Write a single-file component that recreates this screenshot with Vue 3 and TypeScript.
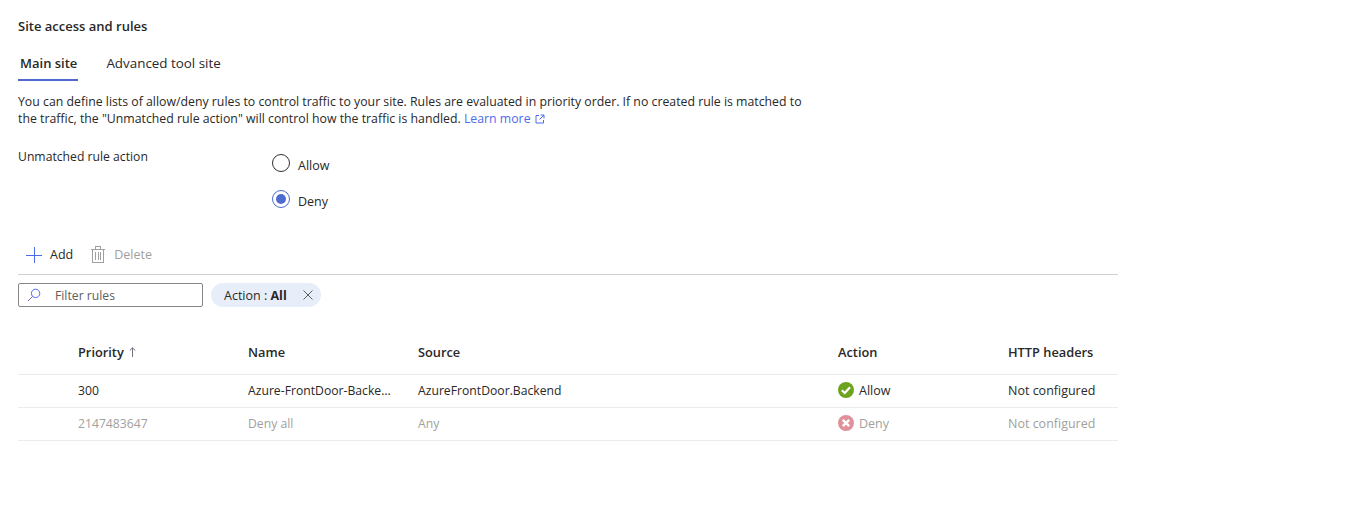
<template>
  <div class="page">
    <h2 class="title">Site access and rules</h2>

    <div class="tabs">
      <div
        v-for="tab in tabs"
        :key="tab"
        class="tab"
        :class="{ active: tab === activeTab }"
      >
        {{ tab }}
      </div>
    </div>

    <p class="intro">
      You can define lists of allow/deny rules to control traffic to your site. Rules are evaluated in priority order. If no created rule is matched to
      the traffic, the "Unmatched rule action" will control how the traffic is handled.
      <a class="link">Learn more</a>
      <svg class="ext" width="10" height="10" viewBox="0 0 10 10" fill="none" stroke="#4f6bed" stroke-width="1">
        <path d="M4 1.5H1V9h7.5V6" />
        <path d="M5.5 1H9v3.5M9 1 4.5 5.5" />
      </svg>
    </p>

    <div class="field">
      <div class="field-label">Unmatched rule action</div>
      <div class="radios">
        <div v-for="opt in options" :key="opt" class="radio-row">
          <span class="radio" :class="{ checked: opt === selected }"></span>
          <span class="radio-text">{{ opt }}</span>
        </div>
      </div>
    </div>

    <div class="toolbar">
      <div class="tool">
        <svg width="16" height="16" viewBox="0 0 16 16" stroke="#4f6bed" stroke-width="1" fill="none" shape-rendering="crispEdges">
          <path d="M8 0v16M0 8h16" />
        </svg>
        <span>Add</span>
      </div>
      <div class="tool disabled">
        <svg width="14" height="17" viewBox="0 0 14 17" stroke="#a19f9d" stroke-width="1" fill="none" shape-rendering="crispEdges">
          <path d="M0 3.5h14M4.5 3V.5h5V3M1.5 3.5v13h11v-13M4.5 6v8M7 6v8M9.5 6v8" />
        </svg>
        <span>Delete</span>
      </div>
    </div>

    <div class="filters">
      <div class="search">
        <svg width="14" height="14" viewBox="0 0 14 14" fill="none" stroke-width="1">
          <circle cx="8.6" cy="5.4" r="4.2" stroke="#4f6bed" />
          <path d="M5.6 8.4 1 13" stroke="#8a5fc7" />
        </svg>
        <span>Filter rules</span>
      </div>
      <div class="chip">
        <span>Action : <b>All</b></span>
        <svg width="10" height="10" viewBox="0 0 10 10" stroke="#605e5c" stroke-width="1" fill="none">
          <path d="M.5.5l9 9M9.5.5l-9 9" />
        </svg>
      </div>
    </div>

    <div class="table">
      <div class="row head">
        <div class="cell sortable">
          Priority
          <svg width="7" height="10" viewBox="0 0 7 10" fill="none" stroke="#7a6f80" stroke-width="1">
            <path d="M3.5 10V.8M.8 3.4 3.5.8l2.7 2.6" />
          </svg>
        </div>
        <div class="cell">Name</div>
        <div class="cell">Source</div>
        <div class="cell">Action</div>
        <div class="cell">HTTP headers</div>
      </div>
      <div
        v-for="rule in rules"
        :key="rule.priority"
        class="row"
        :class="{ muted: rule.action === 'Deny' }"
      >
        <div class="cell narrow">{{ rule.priority }}</div>
        <div class="cell narrow clip">{{ rule.name }}</div>
        <div class="cell narrow">{{ rule.source }}</div>
        <div class="cell action">
          <svg v-if="rule.action === 'Allow'" width="16" height="16" viewBox="0 0 16 16">
            <circle cx="8" cy="8" r="8" fill="#6ea31f" />
            <path d="M3.8 8.2 6.8 11l5.2-5.8" fill="none" stroke="#fff" stroke-width="2.2" />
          </svg>
          <svg v-else width="16" height="16" viewBox="0 0 16 16">
            <circle cx="8" cy="8" r="8" fill="#e0929a" />
            <path d="M4.8 4.8l6.4 6.4M11.2 4.8l-6.4 6.4" fill="none" stroke="#fff" stroke-width="2.4" />
          </svg>
          <span>{{ rule.action }}</span>
        </div>
        <div class="cell">{{ rule.headers }}</div>
      </div>
    </div>
  </div>
</template>

<script setup lang="ts">
interface Rule {
  priority: string
  name: string
  source: string
  action: 'Allow' | 'Deny'
  headers: string
}

const tabs = ['Main site', 'Advanced tool site']
const activeTab = 'Main site'
const options = ['Allow', 'Deny']
const selected = 'Deny'

const rules: Rule[] = [
  {
    priority: '300',
    name: 'Azure-FrontDoor-Backend-Access',
    source: 'AzureFrontDoor.Backend',
    action: 'Allow',
    headers: 'Not configured'
  },
  {
    priority: '2147483647',
    name: 'Deny all',
    source: 'Any',
    action: 'Deny',
    headers: 'Not configured'
  }
]
</script>

<style>
html,
body {
  margin: 0;
  background: #fff;
}
</style>

<style scoped>
.page {
  width: 1118px;
  height: 526px;
  box-sizing: border-box;
  padding: 18px 0 0 18px;
  font-family: "Open Sans", "Noto Sans", sans-serif;
  font-size: 12.5px;
  color: #292827;
}

.title {
  margin: 0;
  font-size: 13px;
  line-height: 17px;
  font-weight: 600;
}

.tabs {
  display: flex;
  gap: 26px;
  margin-top: 17px;
}

.tab {
  height: 29px;
  line-height: 23px;
  padding: 0 2px;
  font-size: 13.4px;
}

.tab.active {
  font-size: 13px;
  font-weight: 600;
  border-bottom: 2px solid #4f6bcf;
  height: 27px;
  padding-right: 1px;
}

.intro {
  width: 790px;
  margin: 12px 0 0;
  line-height: 17px;
  font-size: 12.3px;
}

.link {
  color: #4f6bed;
}

.ext {
  margin-left: 4px;
  vertical-align: -1px;
}

.field {
  display: flex;
  margin-top: 21px;
}

.field-label {
  width: 254px;
  line-height: 17px;
  font-size: 12.2px;
}

.radios {
  display: flex;
  flex-direction: column;
  gap: 18px;
  margin-top: 6px;
}

.radio-row {
  display: flex;
  align-items: center;
  gap: 8px;
  height: 18px;
}

.radio-text {
  padding-top: 4px;
}

.radio {
  width: 18px;
  height: 18px;
  box-sizing: border-box;
  border: 1px solid #323130;
  border-radius: 50%;
  position: relative;
}

.radio.checked {
  border-color: #4f6bcf;
}

.radio.checked::after {
  content: "";
  position: absolute;
  inset: 3px;
  border-radius: 50%;
  background: #4f6bcf;
}

.toolbar {
  display: flex;
  align-items: center;
  gap: 18px;
  margin-top: 27px;
  height: 39px;
  padding-left: 8px;
  border-bottom: 1px solid #d2d0ce;
}

.tool {
  display: flex;
  align-items: center;
  gap: 8px;
}

.tool.disabled {
  gap: 9px;
  color: #a19f9d;
}

.filters {
  display: flex;
  gap: 8px;
  margin-top: 8px;
}

.search {
  width: 185px;
  height: 24px;
  box-sizing: border-box;
  border: 1px solid #8a8886;
  border-radius: 2px;
  display: flex;
  align-items: center;
  gap: 14px;
  padding-left: 8px;
  font-size: 12.2px;
  color: #605e5c;
}

.chip {
  display: flex;
  align-items: center;
  gap: 16px;
  height: 24px;
  width: 110px;
  box-sizing: border-box;
  padding-left: 13px;
  border-radius: 12px;
  background: #e8eef9;
}

.chip b {
  font-weight: 700;
}

.table {
  margin-top: 35px;
}

.row {
  display: grid;
  grid-template-columns: 170px 170px 420px 170px 1fr;
  box-sizing: border-box;
  padding-left: 60px;
  padding-bottom: 2px;
  height: 33px;
  align-items: center;
  border-bottom: 1px solid #edebe9;
}

.row.head {
  padding-bottom: 13px;
  font-weight: 600;
  font-size: 12.8px;
}

.row.muted {
  color: #a19f9d;
}

.sortable {
  display: flex;
  align-items: center;
  gap: 5px;
}

.cell {
  white-space: nowrap;
  min-width: 0;
}

.narrow {
  font-size: 12.2px;
}

.clip {
  padding-right: 24px;
  overflow: hidden;
  text-overflow: ellipsis;
}

.action {
  display: flex;
  align-items: center;
  gap: 5px;
}
</style>
